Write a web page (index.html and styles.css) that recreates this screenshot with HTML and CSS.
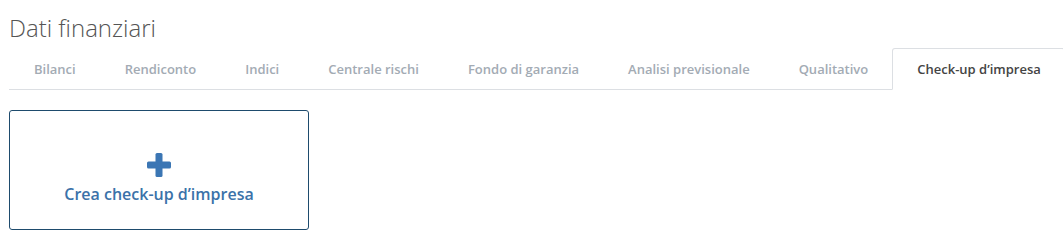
FILE: index.html
```html
<!DOCTYPE html>
<html lang="it">
<head>
<meta charset="utf-8">
<title>Dati finanziari</title>
<link rel="stylesheet" href="styles.css">
</head>
<body>
<div class="page">
  <h1 class="title">Dati finanziari</h1>
  <ul class="tabs">
    <li class="tab">Bilanci</li>
    <li class="tab">Rendiconto</li>
    <li class="tab">Indici</li>
    <li class="tab">Centrale rischi</li>
    <li class="tab">Fondo di garanzia</li>
    <li class="tab">Analisi previsionale</li>
    <li class="tab">Qualitativo</li>
    <li class="tab active">Check-up d’impresa</li>
  </ul>
  <div class="content">
    <a class="create-card" href="#">
      <svg class="plus" width="24" height="24" viewBox="0 0 24 24" aria-hidden="true">
        <rect x="8.5" y="0" width="7" height="24" rx="1.5" fill="#3b76b4"/>
        <rect x="0" y="8.5" width="24" height="7" rx="1.5" fill="#3b76b4"/>
      </svg>
      <span class="create-label">Crea check-up d’impresa</span>
    </a>
  </div>
</div>
</body>
</html>
```

FILE: styles.css
```css
* { box-sizing: border-box; }
html, body { margin: 0; padding: 0; background: #fff; }
body {
  font-family: "Open Sans", "Liberation Sans", Arial, sans-serif;
  color: #333;
}
.page {
  padding: 11px 2px 0 9px;
}
.title {
  margin: 0;
  font-size: 24px;
  font-weight: 300;
  line-height: 34px;
  color: #555;
}
.tabs {
  list-style: none;
  margin: 3px 0 0 0;
  padding: 0;
  display: flex;
  border-bottom: 1px solid #dcdfe3;
}
.tab {
  padding: 10px 23px 9px 24px;
  margin-bottom: -1px;
  font-size: 13px;
  font-weight: 600;
  line-height: 21px;
  color: #a3abb4;
  border: 1px solid transparent;
  border-radius: 3px 3px 0 0;
  white-space: nowrap;
}
.tab.active {
  color: #444;
  background: #fff;
  border-color: #dcdfe3;
  border-bottom-color: #fff;
}
.content {
  padding-top: 20px;
}
.create-card {
  width: 300px;
  height: 120px;
  border: 1px solid #1e4b6d;
  border-radius: 3px;
  display: flex;
  flex-direction: column;
  align-items: center;
  justify-content: flex-start;
  gap: 6px;
  text-decoration: none;
  padding-top: 42px;
}
.plus { display: block; }
.create-label {
  font-size: 16px;
  font-weight: 600;
  color: #3b72a9;
  line-height: 22px;
}
```
